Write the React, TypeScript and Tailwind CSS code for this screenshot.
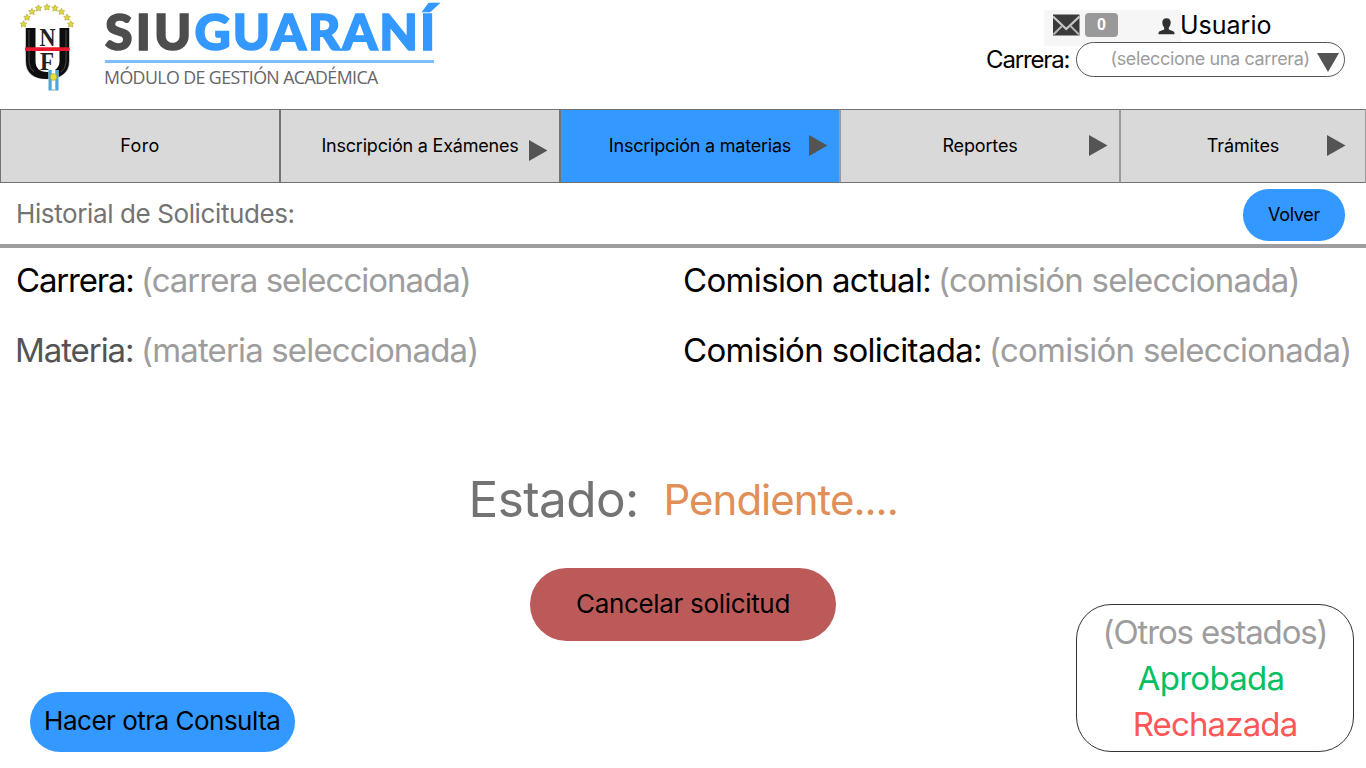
type IconProps = { className?: string };

function Crest({ className }: IconProps) {
  const stars = [
    [23.5, 24], [27, 17.3], [32, 11.5], [38.5, 8], [47, 7], [55, 8], [61.5, 11.5], [67, 17.3], [70.7, 24],
  ];
  return (
    <svg className={className} viewBox="20 2 54 92" width="54" height="92">
      {stars.map(([x, y]) => (
        <path
          key={x}
          transform={`translate(${x} ${y})`}
          d="M0-3.2 1.1-1.1 3.2-.9 1.8.8 2.2 3 0 2.1-2.200 3-1.800.8-3.200-.9-1.100-1.100Z"
          fill="#e2d833"
          stroke="#a9a03c"
          strokeWidth=".6"
        />
      ))}
      <path d="M26 28V61c0 12 8 17.500 21 17.500S69 73 69 61V28" fill="none" stroke="#b0b0b0" strokeWidth="1.500" />
      <path d="M26 28H35.500V61c0 7 4 11 11.500 11S59.500 68 59.500 61V28H69V61C69 73 60 79 47 79S26 73 26 61Z" fill="#0d0d0d" />
      <path d="M29 30V62q.5 7 5 10M66 30V62q-.5 7-5 10" fill="none" stroke="#4a4a4a" strokeWidth="1" />
      <text x="47.500" y="46" textAnchor="middle" fontFamily="Liberation Serif, serif" fontWeight="700" fontSize="26" textLength="16" lengthAdjust="spacingAndGlyphs" fill="#222">N</text>
      <text x="47" y="69.500" textAnchor="middle" fontFamily="Liberation Serif, serif" fontWeight="700" fontSize="25" textLength="14" lengthAdjust="spacingAndGlyphs" fill="#222">F</text>
      <rect x="25" y="47.300" width="44.500" height="3.800" rx="1" fill="#e9172f" />
      <path d="M48.500 70h10v20.500h-10Z" fill="#fff" />
      <path d="M48.500 70h3.200v20.500h-3.200ZM55.300 70h3.200v20.500h-3.200Z" fill="#48a9dc" />
      <path d="M51.700 90h3.600" stroke="#999" />
      <circle cx="53.500" cy="77" r="3.400" fill="#e9e033" stroke="#99913a" strokeWidth=".5" />
    </svg>
  );
}

function Mail({ className }: IconProps) {
  return (
    <svg className={className} viewBox="0 0 27 22" width="27" height="22">
      <rect y=".5" width="26.500" height="21" fill="#3a3a3a" />
      <path d="M0 2.500 13.250 15 26.500 2.500" fill="none" stroke="#c9c9c9" strokeWidth="2.200" />
      <path d="M.500 20.500 9.500 11.500M26 20.500 17 11.500" fill="none" stroke="#b4b4b4" strokeWidth="2" />
    </svg>
  );
}

function Person({ className }: IconProps) {
  return (
    <svg className={className} viewBox="0 0 17 17" width="17" height="17">
      <path d="M8.500.300c2.900 0 4.200 1.700 4.200 4.300 0 2.300-.9 4-1.900 5v1.700c.8 1.200 5.500 1.200 5.700 3.800v1.200H.500v-1.200c.2-2.600 4.900-2.600 5.700-3.800V9.600c-1-1-1.900-2.700-1.900-5C4.300 2 5.600.300 8.500.300Z" fill="#303030" />
    </svg>
  );
}

function ArrowRight({ className }: IconProps) {
  return (
    <svg className={className} viewBox="0 0 18.5 21" width="18.5" height="21">
      <path d="M0 0 18.500 10.500 0 21Z" fill="#545454" />
    </svg>
  );
}

const cell = "grid grid-cols-[1fr_auto_1fr] items-center border-y border-[#737373] text-[18px]";

function Header() {
  return (
    <header className="flex h-[109px] shrink-0 items-start">
      <Crest className="ml-5 mt-0.5 shrink-0" />
      <div className="ml-[30px] w-[345px]">
        <div className="mt-px h-[59px] whitespace-nowrap pl-px font-[Lato,sans-serif] text-[50px] font-black leading-[60px] text-[#4d4d4d] [-webkit-text-stroke-width:1.600px]">
          <span className="tracking-[3.200px]">SIU</span>
          <span className="tracking-[1.900px] text-[#3398ff]">GUARANÍ</span>
        </div>
        <div className="ml-px h-[3px] w-[329px] bg-[#7fbdff]" />
        <div className="mt-[2px] whitespace-nowrap font-['Open_Sans',sans-serif] text-[17.800px] leading-6 tracking-[-0.600px] text-[#666]">
          MÓDULO DE GESTIÓN ACADÉMICA
        </div>
      </div>
      <div className="ml-auto mr-[21px] mt-[10px] flex w-[360px] flex-col">
        <div className="ml-[59px] flex h-9 items-start">
          <div className="flex h-9 w-[137px] shrink-0 items-start bg-[#f6f6f6]">
            <Mail className="ml-[9px] mt-1" />
            <span className="ml-[5px] mt-[3px] flex h-6 w-[33px] items-center justify-center rounded-[4px] bg-[#999] font-['Liberation_Sans',sans-serif] text-[16px] font-bold text-white">
              0
            </span>
            <Person className="ml-[40px] mt-[7.500px]" />
          </div>
          <span className="-ml-px text-[25px] leading-[30px]">Usuario</span>
        </div>
        <div className="-mt-1 flex h-[35px] items-center">
          <span className="w-[91px] whitespace-nowrap pl-px pt-px text-[24px] tracking-[-1.150px]">Carrera:</span>
          <div className="flex h-[35px] flex-1 items-center justify-between rounded-[17.500px] border border-[#555] bg-white pl-[33.500px] pr-[5px]">
            <span className="-mt-px whitespace-nowrap text-[18px] tracking-[-0.360px] text-[#9d9d9d]">(seleccione una carrera)</span>
            <svg className="mt-[6px] shrink-0" width="22" height="19" viewBox="0 0 22 19">
              <path d="M0 0H22L11 19Z" fill="#545454" />
            </svg>
          </div>
        </div>
      </div>
    </header>
  );
}

function Nav() {
  return (
    <nav className="grid h-[74px] shrink-0 grid-cols-[280px_280px_280px_280px_246px] bg-[#d9d9d9]">
      <div className={`${cell} border-x`}>
        <span className="col-start-2 tracking-[0.400px]">Foro</span>
      </div>
      <div className={`${cell} border-x`}>
        <span className="col-start-2 tracking-[-0.200px]">Inscripción a Exámenes</span>
        <ArrowRight className="mr-3 mt-2 justify-self-end" />
      </div>
      <div className={`${cell} border-x border-r-[#9a9a9a] bg-[#3398ff]`}>
        <span className="col-start-2 tracking-[-0.220px]">Inscripción a materias</span>
        <ArrowRight className="-mt-px mr-[11.500px] justify-self-end" />
      </div>
      <div className={`${cell} border-x border-x-[#9a9a9a]`}>
        <span className="col-start-2 tracking-[-0.150px]">Reportes</span>
        <ArrowRight className="-mt-px mr-[11.500px] justify-self-end" />
      </div>
      <div className={`${cell} border-x border-x-[#9a9a9a]`}>
        <span className="col-start-2 tracking-[-0.100px]">Trámites</span>
        <ArrowRight className="-mt-px mr-[19.500px] justify-self-end" />
      </div>
    </nav>
  );
}

export default function App() {
  return (
    <div className="flex h-[768px] w-[1366px] flex-col overflow-hidden bg-white font-[Inter,sans-serif] leading-none text-black">
      <Header />
      <Nav />
      <div className="flex h-[65px] shrink-0 items-center justify-between border-b-4 border-[#9e9d9f] pl-[16px] pr-[21px]">
        <h1 className="text-[26px] tracking-[-0.390px] text-[#737373]">Historial de Solicitudes:</h1>
        <button className="mt-[3px] h-[51.500px] w-[102px] rounded-[25.750px] bg-[#3398ff] text-[18px] tracking-[-0.300px]">
          Volver
        </button>
      </div>
      <main className="flex flex-1 flex-col">
        <section className="grid grid-cols-[667px_1fr] gap-y-[30px] whitespace-nowrap pl-[16px] pt-[12px] text-[33px] leading-10">
          <div className="flex">
            <span className="w-[125px] tracking-[-1.200px]">Carrera:</span>
            <span className="tracking-[-1px] text-[#9d9d9d]">(carrera seleccionada)</span>
          </div>
          <div className="flex">
            <span className="w-[255px] tracking-[-0.650px]">Comision actual:</span>
            <span className="tracking-[-0.760px] text-[#9d9d9d]">(comisión seleccionada)</span>
          </div>
          <div className="flex">
            <span className="-ml-px w-[126px] tracking-[-1.070px] text-[#545454]">Materia:</span>
            <span className="tracking-[-0.850px] text-[#9d9d9d]">(materia seleccionada)</span>
          </div>
          <div className="flex">
            <span className="w-[306px] tracking-[-0.680px]">Comisión solicitada:</span>
            <span className="tracking-[-0.730px] text-[#9d9d9d]">(comisión seleccionada)</span>
          </div>
        </section>
        <section className="mt-[98px] flex h-[62px] items-center pl-[468.500px]">
          <span className="mt-0.5 w-[195px] text-[49.500px] tracking-[-0.600px] text-[#737373]">Estado:</span>
          <span className="mt-0.5 text-[42px] tracking-[-1px] text-[#e08f58]">Pendiente....</span>
        </section>
        <button className="ml-[530px] mt-[38px] h-[73px] w-[306px] shrink-0 rounded-[36.500px] bg-[#bc5a5a] pb-px text-[26px] tracking-[-0.320px]">
          Cancelar solicitud
        </button>
        <section className="-mt-[37px] flex items-end justify-between pl-[30px] pr-3">
          <button className="h-[60.500px] w-[264.500px] whitespace-nowrap rounded-[30.250px] bg-[#3398ff] pb-px text-[26px] tracking-[-0.500px]">
            Hacer otra Consulta
          </button>
          <div className="flex h-[148px] w-[278px] flex-col items-center rounded-[35px] border border-[#333] pt-[4px] text-[33px] leading-[46px]">
            <span className="tracking-[-1.140px] text-[#9d9d9d]">(Otros estados)</span>
            <span className="-ml-2 tracking-[-0.700px] text-[#04bf63]">Aprobada</span>
            <span className="tracking-[-0.850px] text-[#ff5757]">Rechazada</span>
          </div>
        </section>
      </main>
    </div>
  );
}
